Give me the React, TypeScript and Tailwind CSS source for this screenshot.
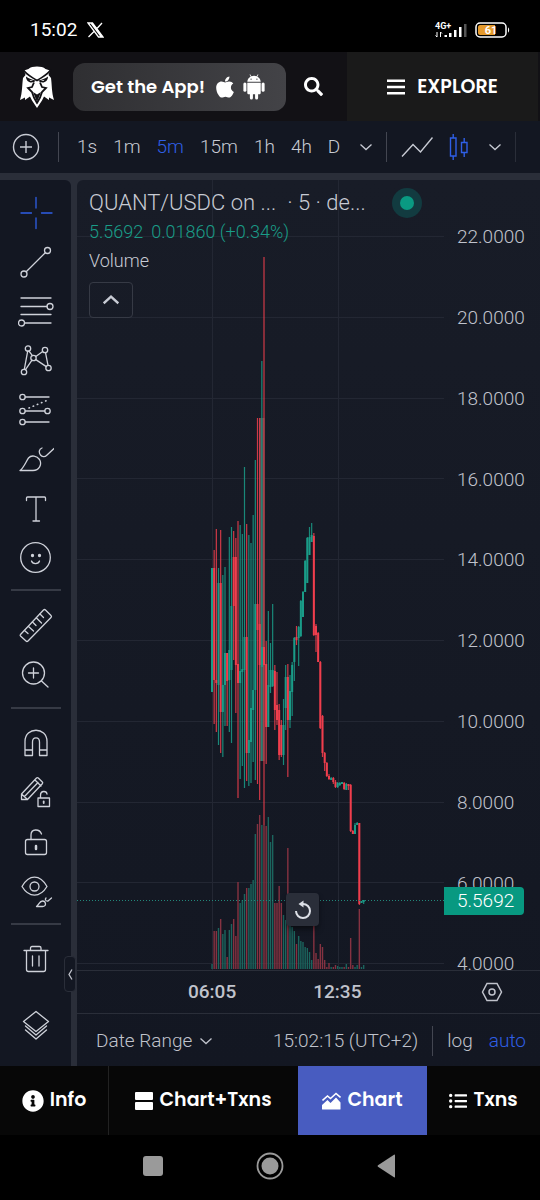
import { ReactNode, useState } from 'react';
import {
  FaApple,
  FaInfoCircle,
  FaListUl,
  FaSearch,
} from 'react-icons/fa';

type Dir = 'u' | 'd';
// direction, high, body top, body bottom, low, volume top (all as y in the pane)
type Bar = [Dir, number, number, number, number, number];

const bars: Bar[] = [
  ['u', 388, 388, 512, 512, 784],
  ['d', 370, 388, 500, 544, 751],
  ['d', 349, 500, 503, 552, 751],
  ['u', 388, 403, 505, 565, 748],
  ['d', 350, 403, 532, 573, 739],
  ['u', 395, 505, 532, 577, 754],
  ['u', 387, 473, 505, 546, 750],
  ['d', 473, 473, 501, 546, 777],
  ['u', 357, 470, 500, 552, 750],
  ['u', 347, 426, 490, 563, 744],
  ['d', 351, 377, 426, 480, 739],
  ['d', 358, 377, 485, 533, 756],
  ['d', 341, 484, 503, 618, 702],
  ['u', 345, 491, 503, 599, 723],
  ['u', 354, 489, 492, 586, 720],
  ['u', 287, 457, 490, 608, 714],
  ['d', 344, 457, 573, 601, 708],
  ['u', 355, 560, 573, 606, 708],
  ['u', 363, 528, 562, 603, 704],
  ['u', 335, 510, 530, 582, 700],
  ['u', 280, 424, 510, 600, 654],
  ['d', 238, 424, 450, 604, 644],
  ['d', 238, 444, 485, 620, 635],
  ['u', 181, 467, 487, 581, 645],
  ['d', 77, 467, 485, 645, 645],
  ['d', 461, 484, 547, 584, 646],
  ['u', 431, 505, 547, 547, 637],
  ['u', 463, 490, 507, 513, 662],
  ['u', 424, 490, 506, 507, 655],
  ['d', 485, 491, 530, 550, 723],
  ['d', 492, 525, 540, 545, 723],
  ['d', 524, 530, 575, 580, 706],
  ['d', 540, 545, 575, 577, 723],
  ['u', 519, 545, 575, 585, 735],
  ['u', 485, 497, 528, 550, 740],
  ['d', 484, 497, 540, 597, 668],
  ['u', 495, 511, 540, 548, 743],
  ['u', 482, 485, 512, 536, 747],
  ['u', 457, 458, 482, 501, 751],
  ['d', 446, 457, 460, 465, 764],
  ['u', 446, 447, 458, 486, 756],
  ['u', 420, 421, 456, 457, 761],
  ['u', 411, 412, 437, 437, 762],
  ['u', 380, 381, 412, 412, 767],
  ['u', 357, 358, 403, 403, 768],
  ['u', 347, 357, 375, 375, 772],
  ['u', 343, 355, 362, 362, 780],
  ['d', 353, 356, 455, 456, 740],
  ['d', 444, 446, 455, 472, 773],
  ['d', 452, 453, 482, 482, 779],
  ['d', 481, 482, 548, 549, 764],
  ['d', 535, 536, 573, 577, 767],
  ['d', 572, 573, 583, 591, 780],
  ['d', 582, 583, 596, 597, 787],
  ['d', 594, 596, 599, 600, 783],
  ['u', 597, 598, 600, 600, 787],
  ['d', 597, 598, 602, 604, 787],
  ['d', 600, 602, 607, 608, 785],
  ['u', 602, 603, 607, 608, 786],
  ['u', 602, 603, 605, 606, 787],
  ['u', 602, 602, 604, 604, 787],
  ['d', 602, 603, 609, 610, 787],
  ['u', 603, 604, 610, 610, 784],
  ['d', 604, 604, 606, 610, 787],
  ['d', 604, 605, 651, 652, 758],
  ['d', 650, 651, 654, 654, 785],
  ['u', 643, 645, 654, 654, 787],
  ['u', 642, 643, 645, 645, 785],
  ['d', 643, 643, 724, 725, 729],
  ['u', 721, 721, 723, 723, 787],
  ['u', 720, 720, 722, 724, 785],
];

const prices = ['22.0000', '20.0000', '18.0000', '16.0000', '14.0000', '12.0000', '10.0000', '8.0000', '6.0000', '4.0000'];
const intervals = ['1s', '1m', '5m', '15m', '1h', '4h', 'D'];

const barX = (i: number) => 135 + (i * 6.5) / 3;

function Icon({ children }: { children: ReactNode }) {
  return (
    <svg
      viewBox="0 0 36 36"
      className="size-9 shrink-0"
      fill="none"
      stroke="currentColor"
      strokeWidth="1.3"
      strokeLinecap="round"
      strokeLinejoin="round"
    >
      {children}
    </svg>
  );
}

function Chevron({ up }: { up?: boolean }) {
  return (
    <svg
      viewBox="0 0 12 8"
      className={up ? 'w-4 h-3' : 'w-3 h-2'}
      fill="none"
      stroke="currentColor"
      strokeWidth={up ? 1.8 : 1.3}
    >
      <path d={up ? 'M0.5 6.5 6 1.5l5.5 5' : 'M0.5 1.5 6 6.5l5.5-5'} />
    </svg>
  );
}

const drawTools = [
  {
    name: 'Cross',
    icon: <path d="M18 2.500v10.500M18 23v10.500M3 18h10.500M23.500 18H34" />,
  },
  {
    name: 'Trend line',
    icon: (
      <>
        <circle cx="6" cy="30" r="3" />
        <circle cx="29.500" cy="6.500" r="3" />
        <path d="M8.200 27.800 27.300 8.700" />
      </>
    ),
  },
  {
    name: 'Fib retracement',
    icon: (
      <>
        <path d="M3 5h30M3 13.500h26M3 21.500h30M7 30h26" />
        <circle cx="32" cy="13.500" r="3" />
        <circle cx="3.500" cy="30" r="3" />
      </>
    ),
  },
  {
    name: 'Pattern',
    icon: (
      <>
        <circle cx="10" cy="6.500" r="2.700" />
        <circle cx="27" cy="8" r="2.700" />
        <circle cx="15.500" cy="16" r="2.700" />
        <circle cx="6" cy="30" r="2.700" />
        <circle cx="30.500" cy="26" r="2.700" />
        <path d="M9.700 9.200 6.300 27.300M10.900 9l3.500 4.600M17.800 14.600 24.700 9.400M27.500 10.700 30 23.300M17.800 17.600l10.500 7M14 18.200 7.500 27.700" />
      </>
    ),
  },
  {
    name: 'Forecast',
    icon: (
      <>
        <circle cx="4.500" cy="6" r="2.700" />
        <circle cx="4.500" cy="20" r="2.700" />
        <circle cx="29.500" cy="20" r="2.700" />
        <circle cx="4.500" cy="31" r="2.700" />
        <path d="M7.200 6H31M7.200 20h19.600M7.200 31H31" />
        <path d="M11 17 30 9" strokeWidth="1.600" strokeDasharray="0.500 4" />
      </>
    ),
  },
  {
    name: 'Brush',
    icon: (
      <>
        <path d="M2 30.500c4-3 6-9 8.500-12.500 3-3.500 8.500-2 11 1.500 3 5-.5 11-6.500 11Z" />
        <path d="M24 8c-3 1-3.500 4.500-1.500 7 1.500 2 4.500 2 6 .5L36 8.500" />
      </>
    ),
  },
  {
    name: 'Text',
    icon: <path d="M8.500 11.500V9c0-.6.400-1 1-1h17c.600 0 1 .4 1 1v2.500M18 8v24M15 32h6.500" />,
  },
  {
    name: 'Emoji',
    icon: (
      <>
        <circle cx="17.500" cy="19.500" r="14.800" />
        <path d="M13.500 23c1 3.400 7 3.400 8 0" />
        <circle cx="14.500" cy="17.500" r="1" fill="currentColor" />
        <circle cx="21.500" cy="17.500" r="1" fill="currentColor" />
      </>
    ),
  },
];

const measureTools = [
  {
    name: 'Measure',
    icon: (
      <>
        <path d="M2.500 27.500 25.500 3c.6-.6 1.400-.6 2 0l5.500 5.500c.6.6.6 1.400 0 2L10 34c-.6.600-1.400.6-2 0l-5.500-5c-.5-.5-.5-1 0-1.500Z" />
        <path d="m6.500 23.500 3.500 3M10.500 19.500l5 4.500M14.500 15l3.500 3.500M18.500 11l5 5M22 7l3.500 3.500" />
      </>
    ),
  },
  {
    name: 'Zoom in',
    icon: (
      <>
        <circle cx="15.500" cy="17" r="11" />
        <path d="M23.500 25 30 31M15.500 12v10M10.500 17h10" />
      </>
    ),
  },
];

const lockTools = [
  {
    name: 'Magnet',
    icon: (
      <path d="M7 30.500V16.500C7 1.500 29 1.500 29 16.500v14h-7.500V17c0-5.500-7-5.500-7 0v13.500ZM7 25h7.500M21.500 25H29" />
    ),
  },
  {
    name: 'Stay in drawing mode',
    icon: (
      <>
        <path d="M3.500 25.500V20L18.500 4c.5-.5 1.200-.5 1.800 0l4 4c.6.6.6 1.200 0 1.800L9.500 25.500ZM3.500 20l6 5.500M17 6l6 6M6.500 22.500 20 8.500" />
        <path d="M20 24h11.500v8.500H20ZM22.500 24v-3c0-4.500 6-4.500 6.500-1" />
        <path d="M25.700 27.500v1.500" strokeWidth="1.800" />
      </>
    ),
  },
  {
    name: 'Lock drawings',
    icon: (
      <>
        <rect x="7.500" y="16.500" width="21" height="15" rx="2" />
        <path d="M13 16.500V12C13 5.500 21.500 5.500 23.500 11" />
        <path d="M18 23v3" strokeWidth="2.500" />
      </>
    ),
  },
  {
    name: 'Hide drawings',
    icon: (
      <>
        <path d="M4 14.500C11 2 22 2 29 14.500 22 26 11 26 4 14.500Z" />
        <circle cx="16.500" cy="14.500" r="4.500" />
        <path d="M18.500 34.500c2.500-2 3-5.500 6-5.500 3.500 0 4.500 5.500 0 5.500ZM28 26c-1.500 1.500 0 3.500 2 3l3.500-3" />
      </>
    ),
  },
];

function ToolButton({ name, children }: { name: string; children: ReactNode }) {
  return (
    <button
      aria-label={name}
      className={`flex h-[49px] w-full items-center justify-center ${
        name === 'Cross' ? 'text-[#2f5fe6]' : 'text-[#cfd2da]'
      }`}
    >
      <Icon>{children}</Icon>
    </button>
  );
}

function StatusBar() {
  return (
    <div className="flex h-[52px] items-center bg-black px-[30px] pt-2">
      <span className="text-[19px] text-white">15:02</span>
      <svg viewBox="0 0 17 16" className="ml-2.5 h-4 w-[17px]" fill="none" stroke="white" strokeWidth="1.300">
        <path d="M1 1h4.500L16 15h-4.500ZM4 1l10.500 14M15 1 9.500 7M7 9.500 1.500 15" />
      </svg>
      <div className="ml-auto flex items-center gap-2">
        <svg viewBox="0 0 33 18" className="h-[18px] w-[33px]" fill="white">
          <text x="1" y="8" fontSize="9" fontWeight="700">
            4G+
          </text>
          <path d="M3 11v5M1.500 14.500 3 16M6.500 16v-5M8 12.500 6.500 11" stroke="white" fill="none" />
          <path d="M10.500 14h2.500v2h-2.500ZM15 12h2.500v4H15ZM20 9h2.500v7H20ZM25 6h2.500v10H25Z" />
          <path d="M30 3h2.500v13H30Z" fill="#555" />
        </svg>
        <svg viewBox="0 0 35 16" className="h-4 w-[35px]">
          <rect x="1" y="1" width="30" height="14" rx="4" fill="none" stroke="white" strokeWidth="1.500" />
          <path d="M33 5.500c1.500.5 1.500 4.500 0 5Z" fill="white" />
          <path d="M5 3h15v10H5c-1 0-2-1-2-2V5c0-1 1-2 2-2Z" fill="#e59a2c" />
          <text x="16" y="12" fontSize="11" fontWeight="700" textAnchor="middle" fill="white">
            61
          </text>
        </svg>
      </div>
    </div>
  );
}

function Logo() {
  return (
    <svg viewBox="0 0 34 42" className="h-[42px] w-[34px]">
      <path
        d="M4 4.500 8.500 3C12-.2 22-.2 25.500 3L30 4.500l-1.500 4.500L31 12c1 7 .5 14 3 22l-5-2.500v2.500l-5-3.500-2 4L17 42l-5-7.500-2-4L5 34v-2.500L0 34c2.500-8 2-15 3-22l2.500-3Z"
        fill="white"
      />
      <path
        d="M3 3.500C6 8.500 11 10.500 17 14.500 23 10.500 28 8.500 31 3.500"
        fill="none"
        stroke="#121115"
        strokeWidth="1.600"
      />
      <path
        d="M6 10.500c0 5 4 7 8 5.500l2-1.500c-4-.5-7-2-10-4ZM28 10.500c0 5-4 7-8 5.500l-2-1.500c4-.5 7-2 10-4Z"
        fill="#121115"
      />
      <path d="m9.500 13.700 3.500 1c-1.500.8-3 .3-3.500-1ZM24.500 13.700l-3.500 1c1.500.8 3 .3 3.500-1Z" fill="white" />
      <path
        d="M14 16.500 12 21l-4 1 4 4c1 4 3 8 5 11 2-3 4-7 5-11l4-4-4-1-2-4.500"
        fill="none"
        stroke="#121115"
        strokeWidth="1.800"
      />
      <path d="m13 26 4 2.500 4-2.500-4 10Z" fill="#121115" />
      <path d="m17 17-3 5 3 5.500 3-5.500Z" fill="white" />
    </svg>
  );
}

function AndroidIcon() {
  return (
    <svg viewBox="0 0 20 24" className="ml-1.5 h-[26px] w-[22px]" fill="currentColor">
      <path d="M3.800 7.200C4 4.800 5.300 3.200 7 2.300L5.900.6l.5-.3 1.200 1.800a7.500 7.500 0 0 1 4.800 0L13.600.3l.5.3L13 2.300c1.700.9 3 2.500 3.200 4.900ZM7.300 4.200a.6.6 0 1 0 0 1.200.6.6 0 0 0 0-1.200Zm5.400 0a.6.6 0 1 0 0 1.200.6.6 0 0 0 0-1.200Z" />
      <path d="M3.800 8h12.400v9.300c0 .9-.6 1.400-1.400 1.400h-1v3.400a1.400 1.400 0 0 1-2.800 0v-3.400H9v3.400a1.400 1.400 0 0 1-2.800 0v-3.400h-1c-.8 0-1.400-.5-1.400-1.400Z" />
      <rect x="0.200" y="7.800" width="2.800" height="8.500" rx="1.400" />
      <rect x="17" y="7.800" width="2.800" height="8.500" rx="1.400" />
    </svg>
  );
}

function Header() {
  return (
    <header className="flex h-[69px] items-center bg-[#121115] pl-5 font-[Poppins,Inter,sans-serif] text-lg font-semibold text-white">
      <Logo />
      <button className="ml-[19px] flex h-12 w-[213px] items-center rounded-xl bg-linear-to-r from-[#2f2f32] to-[#434347] pl-[18px]">
        Get the App!
        <FaApple className="ml-2 size-6" />
        <AndroidIcon />
      </button>
      <button aria-label="Search" className="ml-[18px]">
        <FaSearch className="size-[19px]" />
      </button>
      <button className="ml-auto mr-0.5 flex h-full w-[191px] items-center justify-center gap-3 bg-[#1a1a1a] text-[19px]">
        <svg viewBox="0 0 18 16" className="h-4 w-[18px]" fill="currentColor">
          <path d="M0 .5h18v2.500H0ZM0 6.800h18v2.500H0ZM0 13h18v2.500H0Z" />
        </svg>
        EXPLORE
      </button>
    </header>
  );
}

function Toolbar() {
  const [interval, setInterval] = useState('5m');

  return (
    <div className="flex h-[52px] items-center bg-[#131722] pl-3 text-[19px] font-light text-[#c8cbd4]">
      <button aria-label="Add symbol">
        <svg viewBox="0 0 28 28" className="size-7" fill="none" stroke="currentColor" strokeWidth="1.400">
          <circle cx="14" cy="14" r="12.500" />
          <path d="M14 8v12M8 14h12" />
        </svg>
      </button>
      <span className="mx-[18px] h-[30px] w-px bg-[#434651]" />
      <div className="flex gap-4">
        {intervals.map((item) => (
          <button
            key={item}
            onClick={() => setInterval(item)}
            className={item === interval ? 'text-[#2f5fe6]' : ''}
          >
            {item}
          </button>
        ))}
      </div>
      <button aria-label="More intervals" className="ml-5">
        <Chevron />
      </button>
      <span className="ml-3.5 h-[30px] w-px bg-[#434651]" />
      <button aria-label="Line" className="ml-3.5">
        <svg viewBox="0 0 32 22" className="h-[22px] w-8" fill="none" stroke="currentColor" strokeWidth="1.400">
          <path d="M1 20.500 12 8.500l7.500 7.500L31.500 1.500" />
        </svg>
      </button>
      <button aria-label="Candles" className="ml-4 text-[#2f5fe6]">
        <svg viewBox="0 0 20 28" className="h-7 w-5" fill="none" stroke="currentColor" strokeWidth="1.400">
          <path d="M1.500 5h5.500v18H1.500ZM4.200 1v4M4.200 23v4M12.500 9.500h5.500v10h-5.500ZM15.200 5v4.500M15.200 19.500V24" />
        </svg>
      </button>
      <button aria-label="Chart styles" className="ml-5">
        <Chevron />
      </button>
      <span className="ml-3.5 h-[30px] w-px bg-[#2a2e39]" />
    </div>
  );
}

function ToolPanel() {
  const separator = <div className="mx-auto my-[9px] h-0.5 w-[50px] bg-[#363a45]" />;

  return (
    <aside className="flex w-[71px] shrink-0 flex-col rounded-tr-md bg-[#131722] pb-4 pt-2">
      {drawTools.map((t) => (
        <ToolButton key={t.name} name={t.name}>{t.icon}</ToolButton>
      ))}
      {separator}
      {measureTools.map((t) => (
        <ToolButton key={t.name} name={t.name}>{t.icon}</ToolButton>
      ))}
      {separator}
      {lockTools.map((t) => (
        <ToolButton key={t.name} name={t.name}>{t.icon}</ToolButton>
      ))}
      {separator}
      <ToolButton name="Remove">
        <path d="M6 9.500h24M12.500 9.500V7c0-.8.700-1.500 1.500-1.500h7.500c.800 0 1.500.7 1.500 1.500v2.500M8.500 9.500v19c0 1.200 1 2 2 2h15c1.200 0 2-1 2-2v-19M14.500 15v10M21 15v10" />
      </ToolButton>
      <div className="mt-auto">
        <ToolButton name="Object tree">
          <path d="M5.500 13.500 18 3.500l12.500 10L18 23.500ZM7.500 18 18 27l10.500-9M7.500 22 18 31l10.500-9" />
        </ToolButton>
      </div>
    </aside>
  );
}

function Plot() {
  return (
    <svg className="block h-[790px] w-full">
      <g stroke="#232733" shapeRendering="crispEdges">
        {prices.map((p, i) => (
          <line key={p} x1="0" x2="100%" y1={56.500 + i * 80.800} y2={56.500 + i * 80.800} />
        ))}
        <line x1="135" x2="135" y1="0" y2="100%" />
        <line x1="261" x2="261" y1="0" y2="100%" />
      </g>
      {bars.map(([dir, , , , , vol], i) => (
        <rect
          key={i}
          x={barX(i) - 0.7}
          y={vol}
          width="1.400"
          height={789 - vol}
          fill={dir === 'u' ? '#1b655e' : '#863241'}
        />
      ))}
      {/* overlapping wicks around the spike */}
      <rect x="182.500" y="238" width="5" height="343" fill="#4f4a4c" />
      {bars.map(([dir, high, top, bottom, low], i) => (
        <g key={i} fill={dir === 'u' ? '#1a9c88' : '#f03e4d'}>
          <rect x={barX(i) - 0.6} y={high} width="1.200" height={low - high} opacity="0.85" />
          <rect x={barX(i) - 1} y={top} width="2" height={Math.max(bottom - top, 1)} />
        </g>
      ))}
      <line x1="0" x2="100%" y1="720.500" y2="720.500" stroke="#22877a" strokeDasharray="1 2" />
    </svg>
  );
}

function Legend() {
  return (
    <div className="absolute left-3 top-2 font-light text-[#c8cbd4]">
      <div className="flex items-center text-[22px] leading-7">
        <span>QUANT/USDC on ...</span>
        <span className="ml-[11px]">· 5 · de...</span>
        <span className="ml-[26px] flex size-[30px] items-center justify-center rounded-full bg-[#123b40]">
          <span className="size-3.5 rounded-full bg-[#0a9a82]" />
        </span>
      </div>
      <div className="flex gap-2 text-lg leading-7 text-[#1a9c88]">
        <span>5.5692</span>
        <span>0.01860 (+0.34%)</span>
      </div>
      <div className="text-lg leading-[30px]">Volume</div>
      <button
        aria-label="Collapse legend"
        className="mt-1.5 flex h-9 w-11 items-center justify-center rounded border border-[#363a45]"
      >
        <Chevron up />
      </button>
    </div>
  );
}

function ChartPanel() {
  return (
    <main className="relative ml-1.5 flex min-w-0 flex-1 flex-col rounded-tl-md bg-linear-to-b from-[#181c27] to-[#131722] font-light text-[#c0c3cc]">
      <div className="flex h-[790px] overflow-hidden">
        <div className="relative min-w-0 flex-1">
          <Plot />
          <button
            aria-label="Reset chart"
            className="absolute left-[209px] top-[713px] flex size-[33px] items-center justify-center rounded bg-[#2a2e39] text-[#dde0e7] shadow-md shadow-black/40"
          >
            <svg viewBox="0 0 18 20" className="h-5 w-[18px]" fill="none" stroke="currentColor" strokeWidth="2">
              <path d="M2 11a7 7 0 1 0 7-7" />
              <path d="M4.500 4 9.500.5v7Z" fill="currentColor" stroke="none" />
            </svg>
          </button>
        </div>
        <div className="relative w-24 shrink-0 pt-[17px] text-[19px]">
          <div className="grid h-[808px] grid-rows-10 items-center pl-[13px]">
            {prices.map((p) => (
              <span key={p}>{p}</span>
            ))}
          </div>
          <div className="absolute left-0 top-[707px] flex h-7 w-20 items-center rounded-r-sm bg-[#089981] pl-[13px] text-white">
            5.5692
          </div>
        </div>
      </div>
      <Legend />
      <div className="flex h-11 items-center border-y border-[#2a2e39] pl-[111px] text-[19px] font-medium">
        <span>06:05</span>
        <span className="ml-[77px]">12:35</span>
        <button aria-label="Scale settings" className="ml-auto flex w-24 justify-center">
          <svg viewBox="0 0 22 20" className="h-5 w-[22px]" fill="none" stroke="currentColor" strokeWidth="1.500">
            <path d="M1.500 10 6 1.500h10L20.500 10 16 18.500H6Z" />
            <circle cx="11" cy="10" r="3" />
          </svg>
        </button>
      </div>
      <div className="flex flex-1 items-center pl-[19px] pr-3.5 pt-0.5 text-[19px]">
        <button className="flex items-center gap-2">
          Date Range <Chevron />
        </button>
        <button className="ml-auto">15:02:15 (UTC+2)</button>
        <span className="mx-3.5 h-[30px] w-px bg-[#434651]" />
        <button>log</button>
        <button className="ml-4 text-[#2f5fe6]">auto</button>
      </div>
      <button
        aria-label="Hide drawings toolbar"
        className="absolute -left-[13px] top-[776px] flex h-9 w-3 items-center justify-center rounded border border-[#2a2e39] bg-[#131722]"
      >
        <svg viewBox="0 0 5 11" className="h-[11px] w-[5px]" fill="none" stroke="currentColor" strokeWidth="1.300">
          <path d="M4 .5 1 5.500l3 5" />
        </svg>
      </button>
    </main>
  );
}

function TabBar() {
  const tab = 'flex items-center justify-center gap-1.5';

  return (
    <nav className="grid h-[69px] grid-cols-[109fr_189fr_129fr_113fr] bg-[#070707] font-[Poppins,Inter,sans-serif] text-[19px] font-semibold text-white">
      <button className={`${tab} border-r border-[#222]`}>
        <FaInfoCircle className="size-[22px]" />
        Info
      </button>
      <button className={tab}>
        <svg viewBox="0 0 18 18" className="size-[18px]" fill="currentColor">
          <rect width="18" height="8" rx="1" />
          <rect y="10" width="18" height="8" rx="1" />
        </svg>
        Chart+Txns
      </button>
      <button className={`${tab} bg-[#485cc0]`}>
        <svg viewBox="0 0 19 18" className="h-[18px] w-[19px]" fill="currentColor">
          <path d="M0 17v-4l5.500-5 3 3L14 5.500l4.500 5V17q0 .6-.6.6H.6Q0 17.600 0 17Z" />
          <path d="M.5 8.500 5.500 4l3 2.500L14 1.500l4.500 4" fill="none" stroke="currentColor" strokeWidth="1.600" />
        </svg>
        Chart
      </button>
      <button className={tab}>
        <FaListUl className="size-[18px]" />
        Txns
      </button>
    </nav>
  );
}

function SystemNav() {
  return (
    <div className="flex h-[65px] items-center justify-center bg-black pb-1 text-[#9a9a9a]">
      <button aria-label="Recents" className="size-5 rounded-[3px] bg-[#9a9a9a]" />
      <button aria-label="Home" className="mx-[93px]">
        <svg viewBox="0 0 28 28" className="size-7">
          <circle cx="14" cy="14" r="12.500" fill="none" stroke="currentColor" strokeWidth="1.800" />
          <circle cx="14" cy="14" r="8.500" fill="currentColor" />
        </svg>
      </button>
      <button aria-label="Back">
        <svg viewBox="0 0 20 24" className="h-6 w-5" fill="currentColor">
          <path d="M18 1.200v21.600q0 1-1 .4L1 12.800q-1-.8 0-1.600L17 .8q1-.6 1 .4Z" />
        </svg>
      </button>
    </div>
  );
}

export default function App() {
  return (
    <div className="min-h-screen bg-black font-[Roboto,sans-serif] text-white">
      <StatusBar />
      <Header />
      <Toolbar />
      <div className="flex h-[893px] bg-[#2a2e39] pt-[7px]">
        <ToolPanel />
        <ChartPanel />
      </div>
      <TabBar />
      <SystemNav />
    </div>
  );
}
